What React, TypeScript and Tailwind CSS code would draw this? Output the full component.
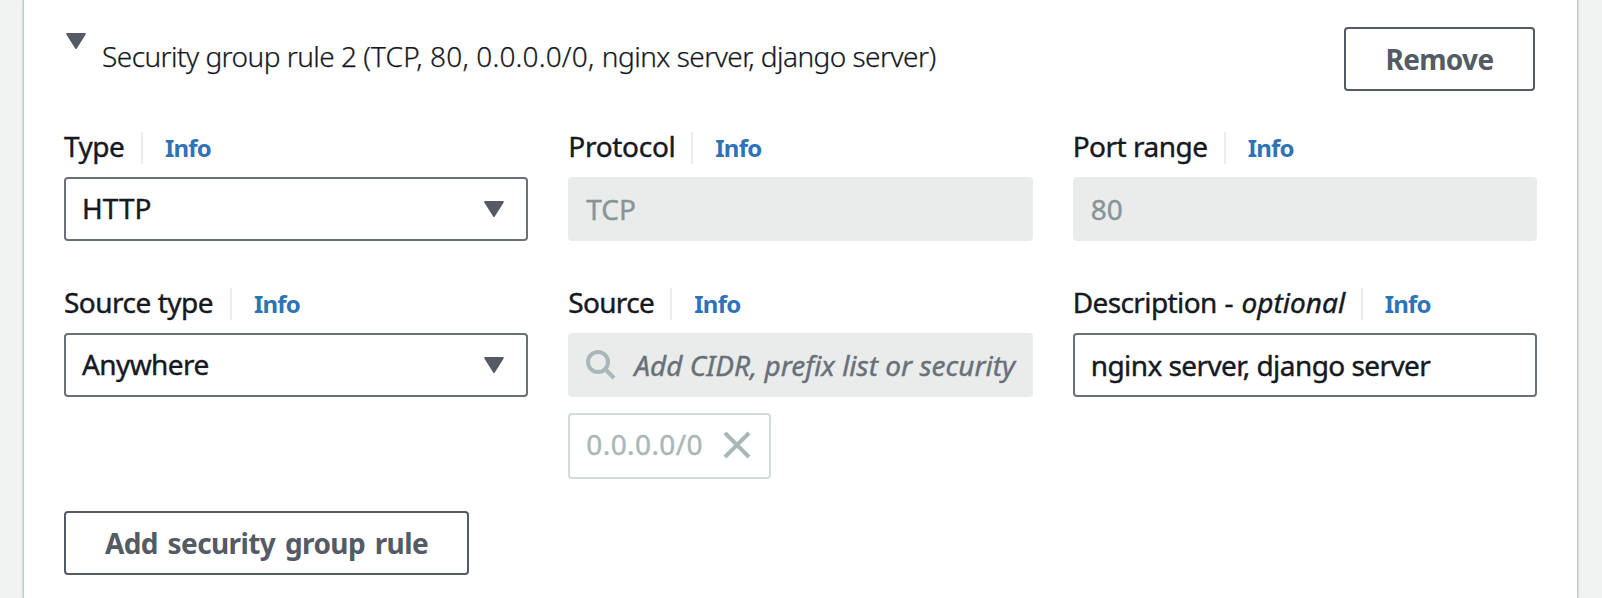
import type { ReactNode } from "react";

function Caret({ className = "" }: { className?: string }) {
  return (
    <svg className={`h-4 w-5 shrink-0 ${className}`} viewBox="0 0 20 16" fill="#545b64" stroke="#545b64" strokeWidth="2" strokeLinejoin="round">
      <path d="M1.2 1h17.6L10 15z" />
    </svg>
  );
}

interface FieldProps {
  label: ReactNode;
  labelClass: string;
  children: ReactNode;
}

function Field({ label, labelClass, children }: FieldProps) {
  return (
    <div className="min-w-0 [-webkit-text-stroke-width:0.4px]">
      <div className="mb-[13px] flex h-8 items-start">
        <div className={`shrink-0 whitespace-nowrap leading-[29px] ${labelClass}`}>{label}</div>
        <div className="h-8 w-[2px] shrink-0 bg-[#eaeded]" />
        <a className="ml-[22px] text-[24px] leading-[31px] font-bold tracking-[-0.8px] text-[#2e73b8] [-webkit-text-stroke-width:0px]">Info</a>
      </div>
      {children}
    </div>
  );
}

function Select({ value, className = "" }: { value: string; className?: string }) {
  return (
    <div className="flex h-16 items-center justify-between rounded-[4px] border-2 border-[#687078] bg-white pr-[22px] pl-4">
      <span className={`pb-[2px] ${className}`}>{value}</span>
      <Caret />
    </div>
  );
}

function DisabledInput({ value }: { value: string }) {
  return <div className="flex h-16 items-center rounded-[4px] bg-[#eaeceb] px-[18px] text-[#879596]">{value}</div>;
}

function Button({ className, children }: { className: string; children: ReactNode }) {
  return (
    <button
      className={`flex h-16 items-center justify-center rounded-[4px] border-2 border-[#545b64] bg-white pb-px font-bold whitespace-nowrap text-[#545b64] ${className}`}
    >
      {children}
    </button>
  );
}

export default function App() {
  return (
    <div className="flex h-[598px] w-full justify-center overflow-hidden bg-[#f1f3f3] pr-px font-['Noto_Sans',sans-serif] text-[28px] leading-[38px] text-[#16191f]">
      <div className="w-[1553px] bg-white px-10 pt-[27px] shadow-[0_0_2px_1px_#aab7b8]">
        <div className="flex items-start pr-[2px]">
          <Caret className="mt-[6px] ml-[2px]" />
          <h3 className="ml-4 flex-1 leading-[59px] font-light tracking-[-0.54px] whitespace-nowrap [-webkit-text-stroke-width:0.25px]">
            Security group rule 2 <span className="tracking-[0.16px]">(TCP, 80, 0.0.0.0/0, </span>nginx server, django server)
          </h3>
          <Button className="w-[191px] tracking-[-0.7px]">Remove</Button>
        </div>

        <div className="mt-[41px] grid grid-cols-3 gap-x-10 gap-y-[47px]">
          <Field label="Type" labelClass="w-[77px] tracking-[-0.5px]">
            <Select value="HTTP" />
          </Field>
          <Field label="Protocol" labelClass="w-[123px] tracking-[-0.3px]">
            <DisabledInput value="TCP" />
          </Field>
          <Field label="Port range" labelClass="w-[151px] tracking-[-0.5px]">
            <DisabledInput value="80" />
          </Field>

          <Field label="Source type" labelClass="w-[166px] tracking-[-0.5px]">
            <Select value="Anywhere" className="tracking-[-0.6px]" />
          </Field>
          <Field label="Source" labelClass="w-[102px] tracking-[-0.7px]">
            <div className="flex h-16 items-center overflow-hidden rounded-[4px] bg-[#eaeceb] pl-[18px]">
              <svg className="h-[30px] w-[30px] shrink-0" viewBox="0 0 30 30" fill="none" stroke="#aab7b8" strokeWidth="4">
                <circle cx="12" cy="12" r="10" />
                <path d="M19 19l9 9" />
              </svg>
              <span className="ml-[18px] whitespace-nowrap text-[#687078] italic">Add CIDR, prefix list or security</span>
            </div>
            <div className="mt-4 flex h-[66px] w-[203px] items-center rounded-[4px] border-2 border-[#d5dbdb] pl-4 text-[#aab7b8]">
              <span className="pb-1 tracking-[0.4px]">0.0.0.0/0</span>
              <svg className="mr-[18px] mb-[2px] ml-auto h-7 w-7" viewBox="0 0 28 28" fill="none" stroke="#aab7b8" strokeWidth="4">
                <path d="M2 2l24 24M26 2L2 26" />
              </svg>
            </div>
          </Field>
          <Field
            label={
              <>
                Description <span className="ml-px">-</span> <em className="ml-[2px] tracking-[0px]">optional</em>
              </>
            }
            labelClass="w-[288px] tracking-[-0.6px]"
          >
            <div className="flex h-16 items-center rounded-[4px] border-2 border-[#687078] bg-white px-4 tracking-[-0.57px]">
              nginx server, django server
            </div>
          </Field>
        </div>

        <Button className="mt-8 w-[405px] tracking-[-0.6px] [word-spacing:3px]">Add security group rule</Button>
      </div>
    </div>
  );
}
